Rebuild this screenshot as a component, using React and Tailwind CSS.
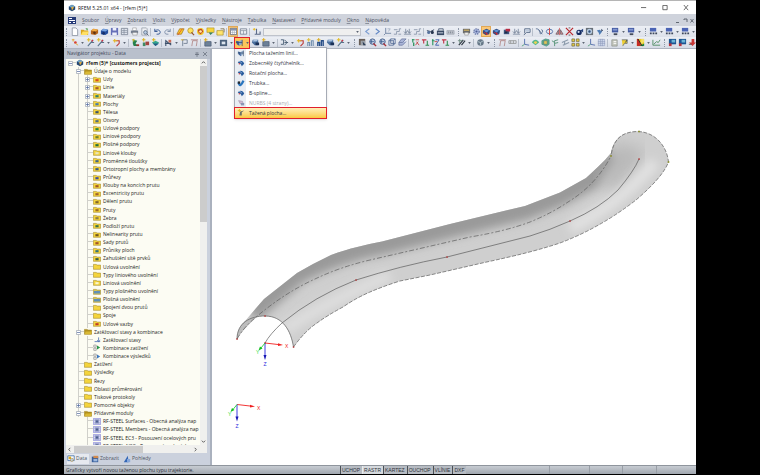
import React from "react";

const GLYPHS = {
  page: <path d="M2.500 1h4l2 2v6.500h-6z" fill="#fff" stroke="#7b8494" strokeWidth=".8" />,
  open: <g><path d="M1 3h3l1 1h4v5H1z" fill="#d9a520" /><path d="M3 5h7L8 9H1z" fill="#ffe066" /><path d="M6 1l3 1-1 2z" fill="#4d9a48" /></g>,
  cubeOrange: <g><path d="M1 4l3-2 5 1v4L6 9 1 8z" fill="#b4651d" /><path d="M1 4l3-2 5 1-3 2z" fill="#f0ad45" /><circle cx="5" cy="6.500" r="1.500" fill="#5e3413" /></g>,
  cubeBlue: <g><path d="M1 4l3-2 5 1v4L6 9 1 8z" fill="#244f9e" /><path d="M1 4l3-2 5 1-3 2z" fill="#78a4e0" /><circle cx="4" cy="7" r="1.500" fill="#152e68" /></g>,
  save: <g><path d="M1 1h8v8H1z" fill="#6670b8" /><path d="M3 1h4v3H3zM2.500 6h5v3h-5z" fill="#edf0fa" /></g>,
  table: <g><path d="M1.500 1.500h7v7h-7z" fill="#e1e5ee" stroke="#6d7787" strokeWidth=".8" /><path d="M2 4h6M2 6h6M4.500 2v6" stroke="#7b8494" strokeWidth=".7" /></g>,
  print: <g><path d="M3 1h4v3H3z" fill="#fff" stroke="#777" strokeWidth=".5" /><path d="M1 4h8v3H1z" fill="#747e90" /><path d="M3 6h5v3H3z" fill="#f1f3f7" stroke="#777" strokeWidth=".5" /></g>,
  preview: <g><path d="M2 1h5l1 1v7H2z" fill="#eef0f4" stroke="#838b99" strokeWidth=".7" /><circle cx="6" cy="6" r="2" fill="#b7cbe3" stroke="#526178" strokeWidth=".8" /><path d="M7.500 7.500l2 2" stroke="#526178" /></g>,
  undo: <path d="M2 2v3h3M2 5c2-3 6-2 6 1 0 2-2 2-4 2" fill="none" stroke="#3d5d96" strokeWidth="1.100" />,
  redo: <path d="M8 2v3H5M8 5C6 2 2 3 2 6c0 2 2 2 4 2" fill="none" stroke="#8292ac" strokeWidth="1.100" />,
  plane: <g><path d="M4 2h5L6 8H1z" fill="#f9d423" stroke="#a46b22" strokeWidth=".8" /><path d="M2 9l5-7" stroke="#d33" strokeWidth=".8" /></g>,
  find: <g><circle cx="5" cy="4" r="3" fill="#ffe25b" stroke="#ad8b22" strokeWidth=".8" /><path d="M6 6l3 3" stroke="#934f2c" strokeWidth="1.300" /></g>,
  swirl: <g><circle cx="5" cy="5" r="3.800" fill="#f1c927" /><path d="M2 3l4-1 2 3-3 3-2-2z" fill="#c03a26" /><circle cx="5" cy="5" r="1.500" fill="#fff1a4" /></g>,
  note: <g><path d="M1 1h8v5H1z" fill="#f7d53c" stroke="#a78c25" strokeWidth=".6" /><path d="M3 6h5L5 9z" fill="#36845e" /></g>,
  folderOut: <g><path d="M1 4h7v5H1z" fill="#ffe46d" stroke="#a78c25" strokeWidth=".7" /><path d="M5 2h4v4" fill="none" stroke="#725d31" strokeWidth=".8" /></g>,
  grid: <g><path d="M1.500 1.500h7v7h-7z" fill="#fff" stroke="#586274" strokeWidth=".9" /><path d="M2 2h6v2H2z" fill="#8494b1" /><path d="M4 4v4M6 4v4M2 6h6" stroke="#96a0b0" strokeWidth=".6" /></g>,
  gridGray: <g><path d="M1.500 2h7v6h-7z" fill="#eceff4" stroke="#697386" strokeWidth=".8" /><path d="M2 4h6M5 4v4" stroke="#8992a1" strokeWidth=".8" /></g>,
  load: <g><path d="M2 1h1v3H2zM1 2h3v1H1z" fill="#e8bd27" /><path d="M5 2v6M3 8h6v-3" fill="none" stroke="#5c6b88" strokeWidth="1.200" /></g>,
  left: <path d="M7 2L3 5l4 3" fill="none" stroke="#7f9fd2" strokeWidth="1.200" />,
  right: <path d="M3 2l4 3-4 3" fill="none" stroke="#6489c5" strokeWidth="1.200" />,
  axis: <g><path d="M3 1v6l-2 2M3 7h6" fill="none" stroke="#7184a4" strokeWidth="1" /><path d="M5 2h3L6 5" fill="none" stroke="#9eabc0" strokeWidth=".9" /></g>,
  steps: <path d="M1 8h3V5h3V2h2M1 3h4M6 8h3" fill="none" stroke="#8c98ad" strokeWidth="1" />,
  glasses: <g><path d="M1 4l4 1 4-2" stroke="#34435c" fill="none" /><circle cx="3" cy="6" r="1.700" fill="#56719c" /><circle cx="7" cy="6" r="1.700" fill="#27364f" /></g>,
  case: <g><path d="M3 4V2h5v2" fill="none" stroke="#53637c" /><path d="M1 4h8v5H1z" fill="#394964" /><path d="M2 6h6v1H2z" fill="#d8e0eb" /></g>,
  ruler: <g><path d="M1 4h8v4H1z" fill="#c2c7cf" stroke="#8c929d" strokeWidth=".6" /><path d="M3 5v2M5 5v2M7 5v2" stroke="#707885" strokeWidth=".8" /></g>,
  card: <g><path d="M1 2h8v5H1z" fill="#6b6c6c" /><path d="M2 3h6v1H2z" fill="#f1c65c" /><path d="M3 6h4v3H3z" fill="#f0f0ef" stroke="#777" strokeWidth=".5" /></g>,
  gear: <g><circle cx="5" cy="5" r="3" fill="#aebbe0" stroke="#6977a4" strokeWidth="1.400" strokeDasharray="1.500 1" /><circle cx="5" cy="5" r="1.200" fill="#4d5e94" /></g>,
  solid: <g><path d="M1 4l4-2 4 2-1 4-4 1-3-2z" fill="#2c4c83" /><path d="M2 4l3-1 3 1-3 2z" fill="#5d8fd3" /><path d="M5 6v3M2 6l5 2" stroke="#c22b36" strokeWidth="1" /></g>,
  solidRed: <g><path d="M2 3h6v5H2z" fill="#3d5682" /><path d="M4 2h5v3H4z" fill="#b72b42" /><path d="M3 5h3v2H3z" fill="#202c43" /></g>,
  support: <g><path d="M3 2v5M7 2v5M1 8h8" stroke="#8390a5" /><path d="M1 5l2 2 2-3 2 3 2-2" fill="none" stroke="#65748b" strokeWidth=".8" /></g>,
  flag: <g><path d="M3 2h6v4H5L2 9M3 2v5" fill="none" stroke="#60728e" strokeWidth="1.100" /><path d="M4 3h4v2H4z" fill="#bac9dd" /></g>,
  curve: <path d="M1 2c3 0 4 1 5 6M4 3l4 5M7 3c2 0 2 3 0 4" fill="none" stroke="#536b8e" strokeWidth="1" />,
  rotate: <g><ellipse cx="5" cy="5" rx="3.500" ry="2.500" fill="none" stroke="#4868a3" strokeWidth=".9" /><path d="M5 1v8" stroke="#d24d4d" strokeWidth="1.100" /></g>,
  mirror: <g><path d="M4 3v5H1zM6 3v5h3z" fill="#cd8f8f" stroke="#685863" strokeWidth=".8" /><path d="M5 1v8" stroke="#c33" strokeWidth=".7" /></g>,
  cross: <g><path d="M1 1l8 8M9 1L1 9" stroke="#b7272d" strokeWidth="1.300" /><path d="M4 1h2M4 9h2" stroke="#5c595d" /></g>,
  ball: <g><circle cx="4.500" cy="6" r="3" fill="#142a60" /><path d="M6 4l3-2v4" fill="#29457e" /><circle cx="4" cy="5.500" r="1.200" fill="#d1dcef" /></g>,
  camera: <g><path d="M1 1h8v8H1z" fill="#687079" /><circle cx="5" cy="5" r="3" fill="#b6c9df" /><circle cx="5" cy="5" r="1.300" fill="#32517d" /></g>,
  screw: <g><path d="M2 4l3-1 3 2-3 4-1-3z" fill="#507eb6" /><path d="M7 2l2 2-2 1z" fill="#293b5c" /></g>,
  monitor: <g><path d="M1 1h7v5H1z" fill="#435aa3" /><path d="M2 2h5v2H2z" fill="#8396cf" /><path d="M3 7h4v2H3z" fill="#454c5c" /></g>,
  screenRow: <g><path d="M1 1h7v4H1z" fill="#4b64b5" /><path d="M1 6h2v2H1zM4 6h2v2H4zM7 6h2v2H7z" fill="#3e485c" /></g>,
  node: <g><circle cx="6" cy="5" r="1.500" fill="#d73c34" /><path d="M2 2h3M3.500 1v3M6 6l3 2" stroke="#e0a425" strokeWidth=".9" /></g>,
  line: <g><path d="M2 9l6-7M6 5h3" stroke="#58748b" strokeWidth="1.200" /><path d="M1 2h4M3 0v4" stroke="#e3bb21" strokeWidth="1.100" /><circle cx="7" cy="3" r="1" fill="#c34" /></g>,
  arc: <g><path d="M4 3h4v3L5 9" fill="none" stroke="#bc3a37" strokeWidth="1.200" /><path d="M1 3h5M3 1v4" stroke="#e4b620" strokeWidth="1.200" /></g>,
  iron: <g><path d="M2 2l5 1-2 3 3 3H3L2 6z" fill="#25814c" /><path d="M1 2h3M3 1v3" stroke="#d1b729" strokeWidth="1" /><path d="M6 7h3v2H6z" fill="#9b332d" /></g>,
  blocks: <g><path d="M2 5h3v4H2z" fill="#3e8c65" /><path d="M5 4h4v4H5z" fill="#a4453f" /><path d="M1 2h4M3 0v4" stroke="#deb421" strokeWidth="1.100" /></g>,
  solidGreen: <g><path d="M1 5l4-2 4 2-4 4z" fill="#33a68e" /><path d="M2 6l3 3 4-3" fill="#235b85" /><path d="M1 2h4M3 0v4" stroke="#dcb51b" strokeWidth="1.100" /></g>,
  frame: <g><path d="M2 9V3l6 5M1 6h7" fill="none" stroke="#3d506b" strokeWidth="1.200" /><path d="M5 2h3v3H5z" fill="#c96c59" /></g>,
  beam: <g><path d="M3 9V2h5v4H4" fill="none" stroke="#728094" strokeWidth="1" /><path d="M1 2h3" stroke="#dbb226" /></g>,
  surfaceNew: <g><path d="M2 4h7v5H2z" fill="#6d8198" stroke="#4c5c74" strokeWidth=".8" /><path d="M1 2h4M3 0v4" stroke="#e1af20" strokeWidth="1.100" /></g>,
  opening: <g><path d="M1 2h8v7H1z" fill="#4b617c" /><path d="M3 4h4v3H3z" fill="#dce4ed" /></g>,
  cylinder: <g><path d="M1 3l4 1v5L2 7z" fill="#3c619a" /><path d="M4 4l4-2v4L5 9z" fill="#8ca9cc" /><path d="M8 2v7M1 5h7" stroke="#334867" strokeWidth=".8" /></g>,
  cylinderBlue: <g><path d="M2 2h6v6H4L1 5z" fill="#496f9e" /><path d="M3 2h5L6 4H2z" fill="#a9c2e0" /><path d="M5 5h4v3H5z" fill="#1b3157" /></g>,
  sweep: <g><path d="M2 3c3-2 6 0 7 3L6 9C5 6 4 5 1 5z" fill="#285b9d" /><path d="M2 3c2 0 3 1 4 2" stroke="#b7cee9" fill="none" /><circle cx="3" cy="6" r="1" fill="#c43d44" /></g>,
  tube: <g><path d="M2 4c1 5 3 5 6-2" fill="none" stroke="#2875bf" strokeWidth="3" /><path d="M1 3h3v3H1z" fill="#242a32" /></g>,
  nurbs: <g><path d="M2 2l5 1 1 4-4-1z" fill="#cfbad2" stroke="#9f8ba3" strokeWidth=".7" /><path d="M5 5h4v3H5z" fill="#8d96b4" /></g>,
  drawn: <g><path d="M4 3l5-1-3 2v4H3z" fill="#6c7061" /><path d="M1 2h4M3 0v4" stroke="#e5b51e" strokeWidth="1.100" /></g>,
  coupler: <path d="M1 2h3v5H1M5 2l3 3-3 3M5 5h4" fill="none" stroke="#455a70" strokeWidth="1" />,
  bars: <g><path d="M2 9V5h2v4M6 9V3h2v6" fill="none" stroke="#708eae" strokeWidth="1.200" /><path d="M1 2h4M3 0v4" stroke="#e1bd34" strokeWidth="1.100" /></g>,
  barsDark: <g><path d="M2 9V5h2v4M6 9V3h2v6" fill="none" stroke="#284f88" strokeWidth="1.500" /><path d="M1 2h4M3 0v4" stroke="#dbad22" strokeWidth="1.100" /></g>,
  pick: <g><path d="M1 1h7v7H1z" fill="#685e57" /><path d="M3 3h5v5H3z" fill="#9ca2a9" /><path d="M5 4l4 4H6z" fill="#293b56" /></g>,
  zoom: <g><circle cx="5" cy="4" r="3" fill="#c5d0e6" stroke="#375484" strokeWidth="1" /><path d="M6 6l3 3" stroke="#a93138" strokeWidth="1.500" /><path d="M4 2v4M2 4h5" stroke="#36598c" strokeWidth=".8" /></g>,
  cube: <g><path d="M1 3h5v5H1zM3 1h5v5H3z" fill="none" stroke="#506894" strokeWidth=".9" /><path d="M1 3l2-2M6 3l2-2M6 8l2-2" stroke="#506894" strokeWidth=".8" /></g>,
  sheet: <path d="M1 5h4l4-4H4zM1 5v3h4l4-4" fill="#aab5d7" stroke="#66749e" strokeWidth=".8" />,
  viewX: <g><path d="M2 1v4M1 2h3" stroke="#27935a" strokeWidth="1.200" /><path d="M3 5v4" stroke="#27935a" strokeWidth="1.400" /><path d="M5 2h4M5 8l3-4M6 4l3 4" stroke="#c64747" strokeWidth="1" /></g>,
  viewY: <g><path d="M1 2h5M3 2v4" stroke="#c1394a" strokeWidth="1.300" /><path d="M7 3v5M5 8h4" stroke="#2f8e50" strokeWidth="1.200" /></g>,
  viewZ: <g><path d="M2 1v7M1 3h3" stroke="#27935a" strokeWidth="1.200" /><path d="M5 2h4L5 8h4" fill="none" stroke="#3b5aa8" strokeWidth="1" /><path d="M4 4h3" stroke="#c64747" /></g>,
  member: <g><path d="M2 8l5-6M5 8l4-5" stroke="#303944" strokeWidth="1.300" /><path d="M1 3h5M3 1v5" stroke="#718e84" /></g>,
  globe: <g><circle cx="5" cy="5" r="3.600" fill="#687989" /><path d="M2 4l3 1 3-2M5 5v3" stroke="#b5c7cf" fill="none" /></g>,
  hanger: <path d="M2 9l1-6h5L7 9M1 2h8" fill="none" stroke="#af8282" strokeWidth=".9" />,
  dim: <path d="M1 3h8v3H1zM3 3v3M6 3v3" fill="none" stroke="#8f9291" strokeWidth=".9" />,
  triad: <g><path d="M4 1v6l5 1" fill="none" stroke="#536daf" strokeWidth="1" /><path d="M4 7L1 9" stroke="#58a37b" strokeWidth="1" /></g>,
  rainbow: <g><path d="M1 5c2-4 6-4 8 0L5 8z" fill="#52b790" /><path d="M3 5c1-2 3-2 4 0L5 7z" fill="#eed251" /></g>,
  meshCube: <g><path d="M1 3l4-2 4 1v5L6 9 1 7z" fill="#61b488" stroke="#36827c" strokeWidth=".7" /><path d="M3 3h4v4H3z" fill="#e0c653" stroke="#48738b" strokeWidth=".7" /></g>,
  branch: <path d="M4 9V3l4-1M4 5L1 3M4 6l4-1" fill="none" stroke="#5f9980" strokeWidth="1.100" />,
  wings: <path d="M1 5l7-3M2 8l7-3M4 4v4" fill="none" stroke="#8c9bac" strokeWidth="1.200" />,
  tiles: <g><path d="M1 1h3v3H1zM6 1h3v3H6zM1 6h3v3H1zM6 6h3v3H6z" fill="#e3c93f" stroke="#726d45" strokeWidth=".8" /></g>,
  mesh: <path d="M1.500 1.500h7v7h-7zM1 4h8M1 6h8M4 1v8M6 1v8" fill="#cdd8ed" stroke="#8996b8" strokeWidth=".6" />,
  paper: <g><path d="M2 2h6v7H2z" fill="#c3c6bd" stroke="#878c84" strokeWidth=".7" /><path d="M4 4h3M4 6h3" stroke="#fff" /></g>,
  lamp: <g><path d="M2 2h6v4H5L3 9" fill="#efcf32" stroke="#596579" strokeWidth=".8" /><path d="M6 5l2-3" stroke="#345" /></g>,
  colors: <g><path d="M1 1h8v8H1z" fill="#efca2b" /><path d="M6 1h3v3L5 8z" fill="#f4e264" /><path d="M1 1h2l3 8H1z" fill="#c52b23" /><path d="M4 9h5V6z" fill="#188946" /><path d="M2 1l5 8" stroke="#242522" strokeWidth="1" /></g>,
  chart: <path d="M1 2v6h8M2 7l3-3 2 1 2-3" fill="none" stroke="#508d63" strokeWidth="1" />,
  program: <g><path d="M1 1h8v6H1z" fill="#1d5593" /><path d="M4 2h4v3H4z" fill="#6cb4d6" /><path d="M1 6h3v3H1z" fill="#b8323c" /></g>,
  exit: <g><path d="M4 1h3v4h2L5 9 1 5h3z" fill="#ca3836" /><path d="M1 7h3" stroke="#555" /></g>,
  data: <g><path d="M1 1h8v6H1z" fill="#fff" stroke="#285d9e" strokeWidth=".9" /><path d="M2 2h3v3H2z" fill="#dcaa22" /><circle cx="6" cy="6" r="2" fill="#b8cce5" stroke="#b18625" strokeWidth=".7" /></g>,
  show: <g><path d="M1 2h8v7H1z" fill="#385f9b" /><path d="M3 1h6v3H3z" fill="#d28a4c" /><path d="M3 5h5v3H3z" fill="#9bb7de" /></g>,
  view: <g><path d="M1 9l5-8 1 8z" fill="#3467b7" /><path d="M5 5h4v4H5z" fill="#86a7da" /></g>,
  app: <g><path d="M1 3l4-2 4 2v4L5 9 1 7z" fill="#234672" /><path d="M1 3l4-2 4 2-4 2z" fill="#6fa3c7" /><path d="M4 4l3-1v2L5 8z" fill="#e0ab3d" /></g>,
};

function Glyph({ name, size = "size-[9px]" }) {
  return <svg viewBox="0 0 10 10" aria-hidden="true" className={`${size} shrink-0`}>{GLYPHS[name]}</svg>;
}

const TOP_A = "# page open cubeOrange cubeBlue save table print preview | undo redo | plane find swirl note folderOut | *grid gridGray | load".split(" ");
const TOP_B = "left right axis steps support steps | glasses case ruler : card gear *solid solid solidRed support flag | curve rotate mirror cross ball camera screw : monitor v monitor v : screenRow v screenRow v screenRow v".split(" ");
const LOW_A = "# node v line line v arc v | iron blocks solidGreen | frame v beam hanger | surfaceNew v opening v".split(" ");
const LOW_B = "cylinderBlue surfaceNew v | coupler v arc bars barsDark cylinderBlue line v : pick zoom zoom cube sheet | viewX viewY viewZ viewY v member v | globe v : hanger dim | triad rainbow meshCube branch wings tiles v triad mesh | paper lamp v colors v chart : program program exit".split(" ");

function Tools({ items }) {
  return items.map((item, i) => {
    if (item === "|") return <span key={i} className="flex w-[3px] shrink-0 justify-center"><i className="h-2 w-px bg-[#b8bfcb]" /></span>;
    if (item === ":") return <span key={i} className="flex w-[6px] shrink-0 justify-center"><i className="h-2 border-l border-dotted border-[#8d96a6]" /></span>;
    if (item === "#") return <span key={i} className="flex w-[5px] shrink-0 justify-center"><i className="h-2 border-l border-dotted border-[#8d96a6]" /></span>;
    if (item === "v") return <Drop key={i} />;
    const active = item[0] === "*";
    const name = active ? item.slice(1) : item;
    return (
      <button key={i} type="button" aria-label={name} className={`flex h-[11px] w-[10px] shrink-0 items-center justify-center ${active ? "bg-[#fbc777] outline outline-[#e0a857] -outline-offset-1" : ""}`}>
        <Glyph name={name} />
      </button>
    );
  });
}

function Drop() {
  return <span className="flex w-[6px] shrink-0 items-center justify-center"><svg viewBox="0 0 4 3" className="h-[2px] w-[3px]"><path d="M0 0h4L2 3z" fill="#5d6573" /></svg></span>;
}

const MENU = ["Soubor", "Úpravy", "Zobrazit", "Vložit", "Výpočet", "Výsledky", "Nástroje", "Tabulka", "Nastavení", "Přídavné moduly", "Okno", "Nápověda"];

const SURFACES = [
  ["cylinder", "Plocha tažením linií..."],
  ["sweep", "Zobecnělý čtyřúhelník..."],
  ["sweep", "Rotační plocha..."],
  ["tube", "Trubka..."],
  ["sweep", "B-spline..."],
  ["nurbs", "NURBS (4 strany)..."],
  ["drawn", "Tažená plocha..."],
];

function SurfaceMenu() {
  return (
    <div className="relative flex h-full w-4 shrink-0 items-center">
      <button type="button" aria-label="Plocha" className="relative z-20 flex h-[12px] w-4 items-center border border-[#e01f2d] bg-[#fcc65a]">
        <Glyph name="cylinder" /><Drop />
      </button>
      <ul className="absolute top-[10px] left-0 z-10 w-[93px] border border-[#a6abb5] bg-white text-[5px] leading-[10px] text-[#30343c] shadow-sm">
        {SURFACES.map(([icon, text], i) => (
          <li key={text}>
            <button type="button" disabled={i === 5} className={`flex h-[10px] w-full items-center text-left ${i === 6 ? "bg-linear-to-b from-[#fff0b8] to-[#fbc93e] outline outline-[#e01f2d]" : ""} ${i === 5 ? "text-[#a9abb0]" : ""}`}>
              <span className={`flex h-full w-[11px] items-center justify-center ${i === 6 ? "" : "bg-[#e9edf3]"}`}><Glyph name={icon} size="size-[8px]" /></span>
              <span className="pl-[3px] whitespace-nowrap">{text}</span>
            </button>
          </li>
        ))}
      </ul>
    </div>
  );
}

/* level, icon colour (or icon kind), label, expander */
const TREE = [
  [0, "root", "rfem (5)* [customers projects]", "-"],
  [1, "dark", "Údaje o modelu", "-"],
  [2, "#d44b25", "Uzly", "+"],
  [2, "#a85a28", "Linie", "+"],
  [2, "#2f7f6e", "Materiály", "+"],
  [2, "#467baf", "Plochy", "+"],
  [2, "#3c5168", "Tělesa"],
  [2, "#4d6a82", "Otvory"],
  [2, "#27843f", "Uzlové podpory"],
  [2, "#6e8031", "Liniové podpory"],
  [2, "#236e38", "Plošné podpory"],
  [2, "#e8e4bd", "Liniové klouby"],
  [2, "#3f6488", "Proměnné tloušťky"],
  [2, "#375b88", "Ortotropní plochy a membrány"],
  [2, "#3f4fa0", "Průřezy"],
  [2, "#9f5729", "Klouby na koncích prutu"],
  [2, "#a0622e", "Excentricity prutu"],
  [2, "#80652c", "Dělení prutu"],
  [2, "#9a6a28", "Pruty"],
  [2, "#8e7e45", "Žebra"],
  [2, "#39704a", "Podloží prutu"],
  [2, "#70551d", "Nelinearity prutu"],
  [2, "#a25329", "Sady prutů"],
  [2, "#32707c", "Průniky ploch"],
  [2, "#395d48", "Zahuštění sítě prvků"],
  [2, "plain", "Uzlová uvolnění"],
  [2, "plain", "Typy liniového uvolnění"],
  [2, "#f8f5cf", "Liniová uvolnění"],
  [2, "blue", "Typy plošného uvolnění"],
  [2, "blue", "Plošná uvolnění"],
  [2, "plain", "Spojení dvou prutů"],
  [2, "plain", "Spoje"],
  [2, "#c03c24", "Uzlové vazby"],
  [1, "dark", "Zatěžovací stavy a kombinace", "-"],
  [2, "case", "Zatěžovací stavy"],
  [2, "combo", "Kombinace zatížení"],
  [2, "result", "Kombinace výsledků"],
  [1, "plain", "Zatížení"],
  [1, "plain", "Výsledky"],
  [1, "plain", "Řezy"],
  [1, "plain", "Oblasti průměrování"],
  [1, "plain", "Tiskové protokoly"],
  [1, "plain", "Pomocné objekty", "+"],
  [1, "dark", "Přídavné moduly", "-"],
  [2, "module", "RF-STEEL Surfaces - Obecná analýza nap"],
  [2, "module", "RF-STEEL Members - Obecná analýza nap"],
  [2, "module", "RF-STEEL EC3 - Posouzení ocelových pru"],
  [2, "module", "RF-STEEL AISC - Posouzení ocelových pr"],
];

function TreeIcon({ kind }) {
  if (kind === "root") return <Glyph name="app" size="size-[8px]" />;
  let art;
  if (kind === "case") art = <path d="M7 2v5M5 6l2 2 2-2M2 8h7" fill="none" stroke="#3e66b0" />;
  else if (kind === "combo" || kind === "result") art = <g><path d="M1 1.500h3v3H1zM1 6h3v3H1z" fill="#fff" stroke="#777" strokeWidth=".8" /><path d="M5 2l4 3-4 3z" fill={kind === "combo" ? "#28964a" : "#3b77bf"} /></g>;
  else if (kind === "module") art = <g><path d="M.5.5h9v9h-9z" fill="#d7d8f7" stroke="#9090d8" /><path d="M2 3h6M3 5h4M2 7h6M5 3v4" stroke="#34487e" /></g>;
  else {
    const body = kind === "dark" ? "#b2901e" : "#f4d43d";
    art = (
      <g>
        <path d="M.5 2h3.500l1 1h4.500v6h-9z" fill={body} stroke="#a58a2a" strokeWidth=".8" />
        {kind === "dark" && <path d="M2 5h8L8.500 9H1z" fill="#d9b935" />}
        {kind === "blue" && <path d="M1 4h8v4H1z" fill="#5f8fb8" />}
        {kind[0] === "#" && <path d="M3 4.500h4v3H3z" fill={kind} />}
      </g>
    );
  }
  return <svg viewBox="0 0 10 10" aria-hidden="true" className="h-[7px] w-[8px] shrink-0" preserveAspectRatio="none">{art}</svg>;
}

function Branch({ stem, tick = true, box }) {
  return (
    <span className="relative flex h-full w-[9px] shrink-0">
      <span className={`w-[4px] ${stem ? "border-r border-[#d0d0ca]" : ""}`} />
      <span className={`h-1/2 w-[5px] ${tick ? "border-b border-[#d0d0ca]" : ""}`} />
      {box && (
        <svg viewBox="0 0 5 5" className="absolute top-[2px] left-px size-[5px]">
          <path d="M.5.5h4v4h-4z" fill="#fff" stroke="#9ba3b2" strokeWidth=".7" />
          <path d={box === "+" ? "M1 2.500h3M2.500 1v3" : "M1 2.500h3"} stroke="#4d679c" strokeWidth=".7" />
        </svg>
      )}
    </span>
  );
}

function Navigator() {
  return (
    <aside className="flex w-[148px] shrink-0 flex-col border-r-2 border-[#aab1be] bg-[#cbd1dd]">
      <header className="flex h-[10px] shrink-0 items-center justify-between bg-[#b9c0cc] px-[3px] text-[5px] text-[#42495a]">
        <h2>Navigátor projektu - Data</h2>
        <span className="flex gap-[4px]">
          <svg viewBox="0 0 5 6" className="h-[5px] w-1"><path d="M1.500 0v3M3.500 0v3M0 3h5M2.500 3v3" stroke="#59616f" strokeWidth=".8" /></svg>
          <svg viewBox="0 0 5 5" className="size-[4px]"><path d="M0 0l5 5M5 0L0 5" stroke="#59616f" strokeWidth=".8" /></svg>
        </span>
      </header>
      <div className="mr-[3px] ml-[2px] flex min-h-0 flex-1 flex-col bg-[#fcfcf3]">
        <div className="flex min-h-0 flex-1">
          <div className="min-w-0 flex-1 overflow-hidden pl-px">
            <ul className="flex h-[391px] flex-col text-[5px] leading-[8px] text-[#1d1d22]">
              {TREE.map(([level, kind, label, box], i) => (
                <li key={label} className="flex min-h-0 flex-1 items-center whitespace-nowrap">
                  {level > 0 && <span className="w-[8px] shrink-0" />}
                  {level > 1 && <Branch stem={i < 43} tick={false} />}
                  <Branch stem={level > 0} box={box} />
                  <TreeIcon kind={kind} />
                  <span className={`pl-[2px] ${level === 0 ? "font-bold" : ""}`}>{label}</span>
                </li>
              ))}
            </ul>
          </div>
          <div className="flex w-[7px] flex-col items-center bg-[#f0f0ee]">
            <svg viewBox="0 0 6 6" className="my-px size-[5px] shrink-0"><path d="M1 4l2-2 2 2" fill="none" stroke="#444" /></svg>
            <div className="h-[156px] w-full bg-[#cccccc]" />
            <svg viewBox="0 0 6 6" className="mt-auto mb-px size-[5px] shrink-0"><path d="M1 2l2 2 2-2" fill="none" stroke="#444" /></svg>
          </div>
        </div>
        <div className="flex h-[8px] shrink-0 items-center bg-[#f0f0ee] pr-2">
          <svg viewBox="0 0 6 6" className="mx-px size-[5px]"><path d="M4 1L2 3l2 2" fill="none" stroke="#444" /></svg>
          <div className="ml-px h-[7px] w-[69px] bg-[#cccccc]" />
          <svg viewBox="0 0 6 6" className="mr-px ml-auto size-[5px]"><path d="M2 1l2 2-2 2" fill="none" stroke="#444" /></svg>
        </div>
      </div>
      <nav className="flex h-[12px] shrink-0 items-center gap-[2px] pl-[3px] text-[5px] text-[#4b5361]">
        {[["data", "Data"], ["show", "Zobrazit"], ["view", "Pohledy"]].map(([icon, text], i) => (
          <button key={text} type="button" className={`flex h-[10px] items-center gap-px pr-[2px] ${i === 0 ? "bg-[#e6e9ef]" : ""}`}><Glyph name={icon} size="size-[8px]" />{text}</button>
        ))}
      </nav>
    </aside>
  );
}

const BODY = "M237 339C237 334 240 326 245 321L264 299L297 273Q314 263 331 255C350 248 365 245 382 241.500L450 224L525 206L560 192.500L586 178Q598 167 605 160L611 153C613 141 620 131.500 638 131.500C655 132 667 146 668.500 162C664 174 650 188 636 200Q600 228 560 243C530 253 500 259 480 263.500L430 275L400 281Q384 286 370 292Q356 298 343 307Q328 315 317 323Q305 331 293.500 347C291 331 283 316 265 316C250 316 239 323 237 339Z";
const SEAM = "M237 339Q244 327 255 318Q284 293 315 279Q340 267 370 260L470 237Q506 231 530 222Q552 213 568 202Q596 185 611 156";
const AXIS_LINE = "M265 343Q270 334 282 323Q315 296 356 280Q400 266 447 257L530 236Q550 230 570 221Q600 208 618 190Q634 171 639 159";

function Triad({ x, y }) {
  return (
    <g transform={`translate(${x} ${y})`} fontSize="5" fontFamily="Liberation Sans, sans-serif">
      <path d="M0 0l13 1.500" stroke="#f02020" strokeWidth=".9" /><path d="M13 .3l5 1.800-5 1z" fill="#f02020" />
      <path d="M0 0v13" stroke="#2828dd" strokeWidth=".9" /><path d="M-1.500 12h3L0 17z" fill="#1515b5" />
      <path d="M0 0l-4 5" stroke="#20d830" strokeWidth=".9" /><path d="M-5 3.500l2.500 2-4 2z" fill="#10c020" />
      <text x="20" y="5" fill="#f02020">X</text>
      <text x="-9" y="11" fill="#20d830">Y</text>
      <text x="-1.500" y="23" fill="#2828dd">Z</text>
    </g>
  );
}

function Canvas() {
  return (
    <main className="min-w-0 flex-1 bg-white">
      <svg viewBox="212 49 484 416" preserveAspectRatio="xMinYMin meet" className="block size-full" role="img" aria-label="Tažená plocha">
        <defs>
          <clipPath id="body"><path d={BODY} /></clipPath>
          <filter id="soft" x="-20%" y="-20%" width="140%" height="140%"><feGaussianBlur stdDeviation="5" /></filter>
          <filter id="wide" x="-50%" y="-50%" width="200%" height="200%"><feGaussianBlur stdDeviation="8" /></filter>
        </defs>
        <path d={BODY} fill="#cfcfcf" />
        <g clipPath="url(#body)" fill="none">
          <path d="M250 312L297 272Q340 250 382 243L450 226L525 208L560 194L590 178L612 152" stroke="#9a9a9a" strokeWidth="24" filter="url(#soft)" />
          <path d="M612 150L632 156L606 186" stroke="#b8b8b8" strokeWidth="18" filter="url(#wide)" />
          <path d="M284 330Q330 300 390 276" stroke="#dedede" strokeWidth="12" filter="url(#soft)" />
          <path d="M570 228Q620 204 655 162" stroke="#e2e2e2" strokeWidth="12" filter="url(#soft)" />
        </g>
        <path d="M237 339C237 323 250 316 258 316Q244 328 237 339Z" fill="#bdbdbd" />
        <g fill="none" stroke="#5c5c5c" strokeWidth=".7">
          <path d="M237 339C237 323 250 316 265 316C283 316 291 331 293.500 347" />
          <path d={SEAM} strokeDasharray="5 2 2 2" />
          <path d={AXIS_LINE} />
          <path d="M293.500 347Q305 331 317 323Q328 315 343 307Q356 298 370 292Q384 286 400 281L430 275L480 263.500C500 259 530 253 560 243Q600 228 636 200C650 188 664 174 668.500 162C667 146 655 132 638 131.500C620 131.500 613 141 611 156" strokeDasharray="4 1.500" />
        </g>
        {[[237, 339], [265, 316], [293.5, 347], [356, 280], [447, 257], [570, 221], [639, 159], [265, 343]].map(([x, y]) => <rect key={`${x}-${y}`} x={x - 0.7} y={y - 0.7} width="1.500" height="1.500" fill="#b03a3a" />)}
        {[[611, 156], [639, 131.5], [668.5, 162]].map(([x, y]) => <rect key={`${x}-${y}`} x={x - 0.8} y={y - 0.8} width="1.600" height="1.600" fill="#8c9026" />)}
        <Triad x={265} y={343} />
        <Triad x={237} y={404.5} />
      </svg>
    </main>
  );
}

export default function App() {
  return (
    <div className="h-screen overflow-hidden bg-black px-16 pb-px font-['Open_Sans','Noto_Sans',sans-serif]">
      <div className="flex h-full flex-col overflow-hidden border-t border-[#b5b5b5] bg-[#dfe3ec]">
        <header className="flex h-[13px] shrink-0 items-center bg-white pl-1 text-[5px] leading-[8px] text-[#111317]">
          <Glyph name="app" size="size-[8px]" />
          <h1 className="pl-[2px]">RFEM 5.25.01 x64 - [rfem (5)*]</h1>
          <div className="ml-auto flex">
            {["M0 3h6", "M1 .5h5v5H1z", "M1 0l5 6M6 0L1 6"].map((d, i) => (
              <button key={d} type="button" aria-label={["Minimalizovat", "Maximalizovat", "Zavřít"][i]} className="flex w-[21px] justify-center"><svg viewBox="0 0 7 7" className="size-[6px]"><path d={d} fill="none" stroke="#444" strokeWidth=".9" /></svg></button>
            ))}
          </div>
        </header>
        <nav className="flex h-[12px] shrink-0 items-center gap-[6px] bg-[#cfd3dc] pl-1 text-[5px] leading-[8px] text-[#4a4f5c]">
          <svg viewBox="0 0 8 7" className="h-[7px] w-[8px] shrink-0"><path d="M0 0h8v7H0z" fill="#253a78" /><path d="M1 1.500h3M1 3.500h6M1 5.500h2M5 5.500h2" stroke="#fff" /></svg>
          {MENU.map((m) => <button key={m} type="button" className="whitespace-nowrap"><u className="decoration-[#8b909b] decoration-1">{m[0]}</u>{m.slice(1)}</button>)}
          <svg viewBox="0 0 18 5" className="mr-[2px] ml-auto h-[5px] w-[18px]"><path d="M0 4.500h3M8 1h3v3M8 1v1M14.500 1l3 3.500M17.500 1l-3 3.500" fill="none" stroke="#555b67" strokeWidth=".9" /></svg>
        </nav>
        <div className="flex h-[11px] shrink-0 items-center bg-linear-to-b from-[#eceff5] to-[#dde1ea]">
          <Tools items={TOP_A} />
          <div className="mr-px ml-[2px] flex h-[8px] w-[98px] shrink-0 items-center border border-[#bfc3cb] bg-[#efefef]">
            <select aria-label="Zatěžovací stav" className="h-full min-w-0 flex-1 appearance-none text-[5px]"><option /></select>
            <Drop />
          </div>
          <Tools items={TOP_B} />
        </div>
        <div className="flex h-[12px] shrink-0 items-center border-b border-[#aeb4c0] bg-linear-to-b from-[#eceff5] to-[#d6dbe6]">
          <Tools items={LOW_A} />
          <SurfaceMenu />
          <Tools items={LOW_B} />
        </div>
        <div className="flex min-h-0 flex-1">
          <Navigator />
          <Canvas />
        </div>
        <footer className="flex h-[9px] shrink-0 items-center border-t border-[#8f959d] bg-linear-to-b from-[#c7ccd2] to-[#a2a8b0] text-[5px] leading-[7px] text-[#2f343c]">
          <p className="w-[276px] pl-[2px] whitespace-nowrap">Graficky vytvoří novou taženou plochu typu trajektorie.</p>
          <div className="flex font-['Liberation_Sans',sans-serif] text-[5px]">
            {["UCHOP", "RASTR", "KARTEZ", "OUCHOP", "VLÍNIE", "DXF"].map((t) => (
              <button key={t} type="button" className={`h-[8px] border-l pr-[2px] pl-px ${t === "RASTR" ? "border-[#e8ebee] bg-[#d5d9dd]" : "border-[#4b5057] bg-[#b6bbc2]"}`}>{t}</button>
            ))}
          </div>
          <div className="ml-auto flex h-full">
            {["w-[40px]", "w-[33px]", "w-[34px]", "w-[40px]"].map((w, i) => <span key={i} className={`${w} border-l border-[#989ea6]`} />)}
          </div>
        </footer>
      </div>
    </div>
  );
}
